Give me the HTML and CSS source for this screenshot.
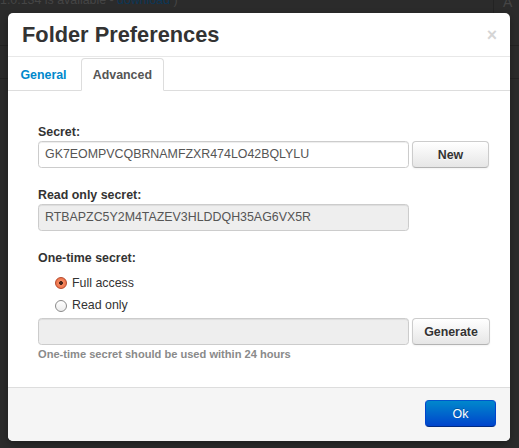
FILE: index.html
```html
<!DOCTYPE html>
<html>
<head>
<meta charset="utf-8">
<title>Folder Preferences</title>
<link rel="stylesheet" href="styles.css">
</head>
<body>
<div class="page">
  <div class="topbar">
    <span class="update">1.0.134 is available - <a class="dl">download</a> )</span>
    <span class="vsep"></span>
    <span class="topA">A</span>
  </div>
  <div class="band"></div>
</div>

<div class="modal">
  <div class="modal-header">
    <h3 class="title">Folder Preferences</h3>
    <span class="close">&times;</span>
  </div>
  <div class="tabs">
    <a class="tab">General</a>
    <a class="tab active">Advanced</a>
  </div>
  <div class="modal-body">
    <div class="group">
      <div class="label">Secret:</div>
      <div class="row">
        <div class="input">GK7EOMPVCQBRNAMFZXR474LO42BQLYLU</div>
        <div class="btn">New</div>
      </div>
    </div>
    <div class="group">
      <div class="label">Read only secret:</div>
      <div class="row">
        <div class="input readonly">RTBAPZC5Y2M4TAZEV3HLDDQH35AG6VX5R</div>
      </div>
    </div>
    <div class="group last">
      <div class="label">One-time secret:</div>
      <div class="radios">
        <div class="radio-row"><span class="radio checked"></span><span>Full access</span></div>
        <div class="radio-row"><span class="radio"></span><span>Read only</span></div>
      </div>
      <div class="row">
        <div class="input readonly"></div>
        <div class="btn gen">Generate</div>
      </div>
      <div class="help">One-time secret should be used within 24 hours</div>
    </div>
  </div>
  <div class="modal-footer">
    <div class="btn-primary">Ok</div>
  </div>
</div>
</body>
</html>
```

FILE: styles.css
```css
html, body {
  margin: 0;
  padding: 0;
}
body {
  width: 519px;
  height: 448px;
  overflow: hidden;
  background: #2b2b2b;
  font-family: "Liberation Sans", Arial, sans-serif;
  font-size: 12.4px;
  color: #333;
  position: relative;
}

/* background page (dimmed) */
.page {
  width: 519px;
}
.topbar {
  height: 45px;
  border-bottom: 1px solid #232323;
  display: flex;
  align-items: flex-start;
}
.update {
  display: block;
  margin-top: -9px;
  line-height: 18px;
  color: #454545;
  white-space: nowrap;
}
.dl {
  color: #0c3656;
}
.vsep {
  margin-left: auto;
  width: 1px;
  height: 45px;
  background: #232323;
}
.topA {
  width: 16px;
  padding-left: 9px;
  margin-top: -7px;
  line-height: 18px;
  color: #454545;
  font-size: 14px;
}
.band {
  height: 32px;
  border-bottom: 1px solid #232323;
}

/* modal */
.modal {
  position: absolute;
  left: 8px;
  top: 13px;
  width: 502px;
  height: 428px;
  background: #fff;
  border-radius: 5px;
  box-shadow: 0 3px 7px rgba(0, 0, 0, 0.3);
  display: flex;
  flex-direction: column;
  overflow: hidden;
}
.modal-header {
  height: 43px;
  border-bottom: 1px solid #e8e8e8;
  padding: 0 14px;
  display: flex;
  align-items: center;
}
.title {
  margin: 0;
  padding-top: 1px;
  font-size: 21.8px;
  font-weight: bold;
  line-height: 26px;
  color: #333;
}
.close {
  margin-left: auto;
  margin-right: -1px;
  font-size: 17.7px;
  font-weight: bold;
  line-height: 18px;
  color: #333;
  opacity: 0.2;
}

.tabs {
  height: 33px;
  border-bottom: 1px solid #ddd;
  display: flex;
  align-items: flex-start;
}
.tab {
  box-sizing: border-box;
  height: 33px;
  margin-top: 1px;
  margin-bottom: -1px;
  margin-right: 3px;
  padding: 0 10.6px 0 11.4px;
  display: flex;
  align-items: center;
  font-weight: bold;
  color: #0088cc;
  border: 1px solid transparent;
  border-radius: 4px 4px 0 0;
}
.tab.active {
  padding: 0 10.6px;
  color: #555;
  background: #fff;
  border-color: #ddd #ddd transparent;
}

.modal-body {
  flex: 1;
  padding: 32px 0 0 30px;
}
.group {
  margin-bottom: 18px;
}
.group.last {
  margin-bottom: 0;
}
.label {
  font-weight: bold;
  line-height: 18px;
  color: #333;
}
.row {
  display: flex;
  gap: 3px;
}
.input {
  box-sizing: border-box;
  width: 371px;
  height: 27px;
  padding: 0 6px;
  border: 1px solid #ccc;
  border-radius: 3.5px;
  box-shadow: inset 0 1px 1px rgba(0, 0, 0, 0.075);
  background: #fff;
  color: #555;
  line-height: 25px;
  white-space: nowrap;
}
.input.readonly {
  background: #eee;
}
.btn {
  box-sizing: border-box;
  width: 77px;
  height: 27px;
  border: 1px solid #ccc;
  border-bottom-color: #b3b3b3;
  border-radius: 4px;
  background: linear-gradient(#ffffff, #e6e6e6);
  box-shadow: inset 0 1px 0 rgba(255, 255, 255, 0.2), 0 1px 2px rgba(0, 0, 0, 0.05);
  color: #333;
  font-weight: bold;
  text-shadow: 0 1px 1px rgba(255, 255, 255, 0.75);
  display: flex;
  align-items: center;
  justify-content: center;
}
.btn.gen {
  width: 78px;
}

.radios {
  margin-top: 5px;
  margin-bottom: 2px;
}
.radio-row {
  height: 22px;
  display: flex;
  align-items: center;
  padding-left: 17px;
  color: #333;
}
.radio {
  box-sizing: border-box;
  width: 12px;
  height: 12px;
  border-radius: 50%;
  margin-right: 5px;
  border: 1px solid #8a8a8a;
  background: linear-gradient(#ffffff, #ececec);
  position: relative;
  top: 1px;
}
.radio-row:first-child .radio {
  top: 0;
}
.radio.checked {
  border-color: #b5482a;
  background: radial-gradient(circle at 50% 50%, #4a2418 0, #4a2418 1.6px, #f58a62 2.2px, #e8643a 100%);
}
.help {
  margin-top: 2px;
  font-size: 11.1px;
  font-weight: bold;
  line-height: 15px;
  color: #8a8a8a;
}

.modal-footer {
  border-top: 1px solid #ddd;
  background: #f5f5f5;
  padding: 12px 14px 14px;
  display: flex;
  justify-content: flex-end;
}
.btn-primary {
  box-sizing: border-box;
  width: 71px;
  height: 27px;
  border: 1px solid #0044cc;
  border-color: #0055cc #0044cc #002a80;
  border-radius: 4px;
  background: linear-gradient(#0088cc, #0044cc);
  color: #fff;
  text-shadow: 0 -1px 0 rgba(0, 0, 0, 0.25);
  display: flex;
  align-items: center;
  justify-content: center;
}
```
